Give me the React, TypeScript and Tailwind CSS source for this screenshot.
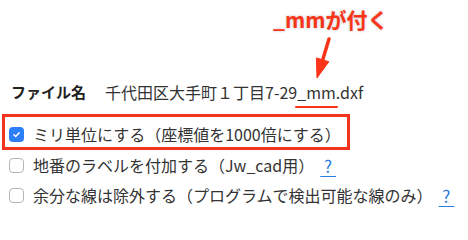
import clsx from 'clsx';

const FONT = { fontFamily: '"Noto Sans CJK JP", "Noto Sans", sans-serif' };

interface OptionRowProps {
  label: string;
  checked?: boolean;
  help?: boolean;
}

function Checkbox({ checked }: { checked?: boolean }) {
  return (
    <span
      className={clsx(
        'w-[15px] h-[15px] rounded-[4px] flex-shrink-0 flex items-center justify-center',
        checked ? 'bg-[#2d7ff9]' : 'bg-white border border-[#b5b5b5]',
      )}
    >
      {checked && (
        <svg viewBox="0 0 12 12" className="w-[9px] h-[9px]">
          <path d="M2.5 6.3 L5 8.6 L9.6 3.6" fill="none" stroke="white" strokeWidth="2" strokeLinecap="round" strokeLinejoin="round" />
        </svg>
      )}
    </span>
  );
}

function OptionRow({ label, checked, help }: OptionRowProps) {
  return (
    <div className="flex items-center gap-[9px] h-full">
      <Checkbox checked={checked} />
      <span className="text-[16px] text-[#333] leading-none whitespace-nowrap">{label}</span>
      {help && (
        <a className="-ml-[3px] text-[17px] leading-none text-[#2a7ae2] underline underline-offset-[3px] whitespace-pre">
          {' ? '}
        </a>
      )}
    </div>
  );
}

export default function App() {
  return (
    <div className="w-[468px] h-[224px] bg-white overflow-hidden" style={FONT}>
      {/* annotation */}
      <div className="pt-[6px] pl-[273px] text-[21px] leading-[26px] font-bold text-[#fa3419] whitespace-nowrap [text-shadow:0_0_3px_rgba(0,0,0,0.25)]">
        _mmが付く
      </div>
      <svg viewBox="0 0 30 41" className="block mt-[5px] ml-[306px] w-[30px] h-[41px]">
        <line x1="23" y1="2" x2="16.8" y2="22.5" stroke="#fa3419" strokeWidth="3.5" strokeLinecap="round" />
        <polygon points="11,41 22.8,24.7 10.4,20.9" fill="#fa3419" strokeLinejoin="round" stroke="#fa3419" strokeWidth="1" />
      </svg>

      {/* file name */}
      <div className="h-[28px] flex items-center pl-[11px] whitespace-nowrap">
        <span className="text-[15px] font-bold text-[#222] w-[94px]">ファイル名</span>
        <span className="text-[16px] text-[#333]">
          千代田区大手町１丁目7-29
          <span className="relative">
            _mm
            <span className="absolute left-[-2px] right-[-2px] bottom-[-4px] h-[2px] rounded-full bg-[#fa3419]" />
          </span>
          .dxf
        </span>
      </div>

      {/* options */}
      <div className="mt-[8px] ml-[2px] w-[348px] h-[36px] border-[3px] border-[#f5341f] pl-[4px] pt-[4px]">
        <OptionRow label="ミリ単位にする（座標値を1000倍にする）" checked />
      </div>
      <div className="h-[30px] pl-[9px]">
        <OptionRow label="地番のラベルを付加する（Jw_cad用）" help />
      </div>
      <div className="h-[30px] pl-[9px]">
        <OptionRow label="余分な線は除外する（プログラムで検出可能な線のみ）" help />
      </div>
    </div>
  );
}
